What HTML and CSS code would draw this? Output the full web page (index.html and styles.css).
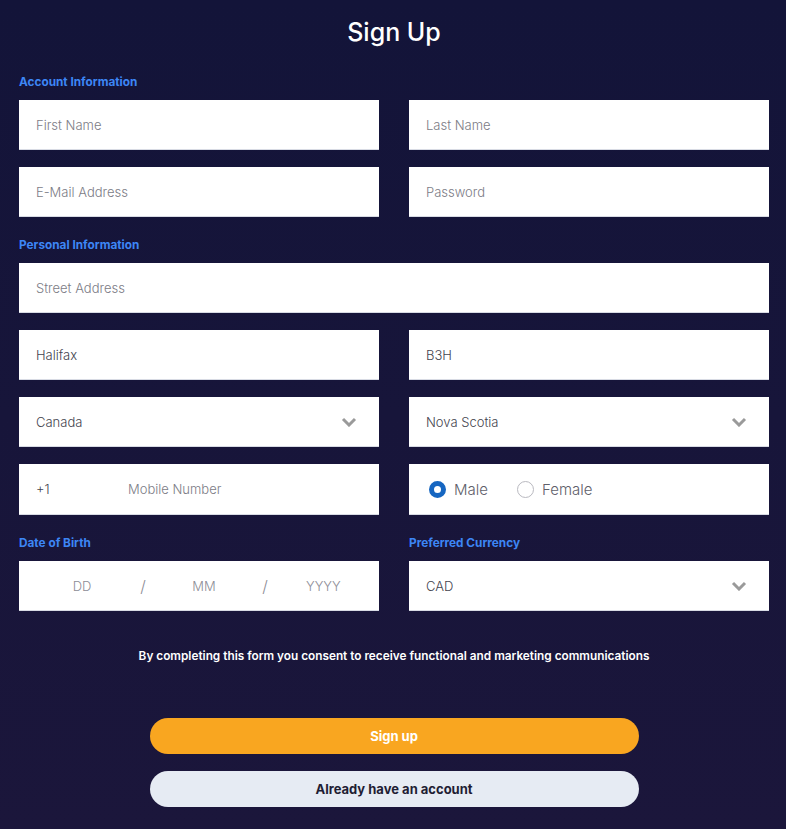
FILE: index.html
```html
<!DOCTYPE html>
<html lang="en">
<head>
    <meta charset="UTF-8">
    <meta name="viewport" content="width=device-width, initial-scale=1.0">
    <title>Sign Up</title>
    <link rel="stylesheet" href="styles.css">
</head>
<body>
    <div class="signup">
        <h1>Sign Up</h1>

        <div class="section-label">Account Information</div>
        <div class="fields">
            <div class="field"><span class="placeholder">First Name</span></div>
            <div class="field"><span class="placeholder">Last Name</span></div>
            <div class="field"><span class="placeholder">E-Mail Address</span></div>
            <div class="field"><span class="placeholder">Password</span></div>
        </div>

        <div class="section-label">Personal Information</div>
        <div class="fields">
            <div class="field wide"><span class="placeholder">Street Address</span></div>
            <div class="field"><span class="value">Halifax</span></div>
            <div class="field"><span class="value">B3H</span></div>
            <div class="field select">
                <span class="value">Canada</span>
                <svg class="chevron" width="16" height="10" viewBox="0 0 16 10"><path d="M2 2l6 6 6-6" fill="none" stroke="#9a9a9a" stroke-width="3"/></svg>
            </div>
            <div class="field select">
                <span class="value">Nova Scotia</span>
                <svg class="chevron" width="16" height="10" viewBox="0 0 16 10"><path d="M2 2l6 6 6-6" fill="none" stroke="#9a9a9a" stroke-width="3"/></svg>
            </div>
            <div class="field phone">
                <span class="value code">+1</span>
                <span class="placeholder">Mobile Number</span>
            </div>
            <div class="field gender">
                <label class="radio"><span class="dot checked"></span>Male</label>
                <label class="radio"><span class="dot"></span>Female</label>
            </div>
        </div>

        <div class="fields">
            <div>
                <div class="section-label">Date of Birth</div>
                <div class="field date">
                    <span class="part">DD</span>
                    <span class="slash">/</span>
                    <span class="part">MM</span>
                    <span class="slash">/</span>
                    <span class="part year">YYYY</span>
                </div>
            </div>
            <div>
                <div class="section-label">Preferred Currency</div>
                <div class="field select">
                    <span class="value">CAD</span>
                    <svg class="chevron" width="16" height="10" viewBox="0 0 16 10"><path d="M2 2l6 6 6-6" fill="none" stroke="#9a9a9a" stroke-width="3"/></svg>
                </div>
            </div>
        </div>

        <p class="consent">By completing this form you consent to receive functional and marketing communications</p>

        <div class="actions">
            <button class="btn btn-primary">Sign up</button>
            <button class="btn btn-secondary">Already have an account</button>
        </div>
    </div>
</body>
</html>
```

FILE: styles.css
```css
* {
    margin: 0;
    padding: 0;
    box-sizing: border-box;
}

body {
    font-family: 'Inter', 'Open Sans', sans-serif;
    background: linear-gradient(#131439, #1b163b);
    min-height: 100vh;
}

.signup {
    width: 750px;
    margin-left: 19px;
    padding-bottom: 22px;
}

h1 {
    color: #ffffff;
    text-align: center;
    font-size: 25px;
    font-weight: 500;
    line-height: 36px;
    padding-top: 14px;
}

.section-label {
    color: #3d86f5;
    font-size: 11.8px;
    font-weight: 700;
    line-height: 16px;
    margin-top: 20px;
    margin-bottom: 10px;
}

h1 + .section-label {
    margin-top: 24px;
}

.fields {
    display: grid;
    grid-template-columns: 1fr 1fr;
    column-gap: 30px;
    row-gap: 17px;
}

.field {
    height: 50px;
    background: #ffffff;
    border-bottom: 1px solid #d8dbe4;
    display: flex;
    align-items: center;
    padding: 0 17px;
    font-size: 13px;
    font-weight: 300;
}

.field.wide {
    grid-column: 1 / 3;
}

.placeholder {
    color: #7c7c86;
}

.value {
    color: #44444e;
}

.select {
    justify-content: space-between;
    padding-right: 22px;
}

.phone {
    height: 51px;
}

.phone .code {
    width: 92px;
}

.gender {
    height: 51px;
    padding-left: 20px;
    gap: 29px;
    font-size: 15px;
    color: #60606a;
}

.radio {
    display: flex;
    align-items: center;
    gap: 8px;
}

.dot {
    width: 17px;
    height: 17px;
    border-radius: 50%;
    border: 1px solid #b9b9c0;
    background: #ffffff;
}

.dot.checked {
    border: 5px solid #1666c1;
}

.date {
    padding-left: 43px;
    gap: 36px;
}

.date .part {
    width: 40px;
    text-align: center;
    color: #8d8d96;
}

.date .year {
    width: 30px;
}

.date .slash {
    width: 10px;
    text-align: center;
    color: #8d8d96;
    font-size: 16px;
}

.consent {
    color: #ffffff;
    font-size: 11.8px;
    font-weight: 600;
    text-align: center;
    line-height: 16px;
    margin-top: 37px;
}

.actions {
    display: flex;
    flex-direction: column;
    align-items: center;
    gap: 17px;
    margin-top: 54px;
}

.btn {
    width: 489px;
    height: 36px;
    border: none;
    border-radius: 18px;
    font-family: inherit;
    font-size: 13px;
    font-weight: 700;
}

.btn-primary {
    background: #f9a620;
    color: #ffffff;
}

.btn-secondary {
    background: #e6ebf3;
    color: #1f1d33;
}
```
